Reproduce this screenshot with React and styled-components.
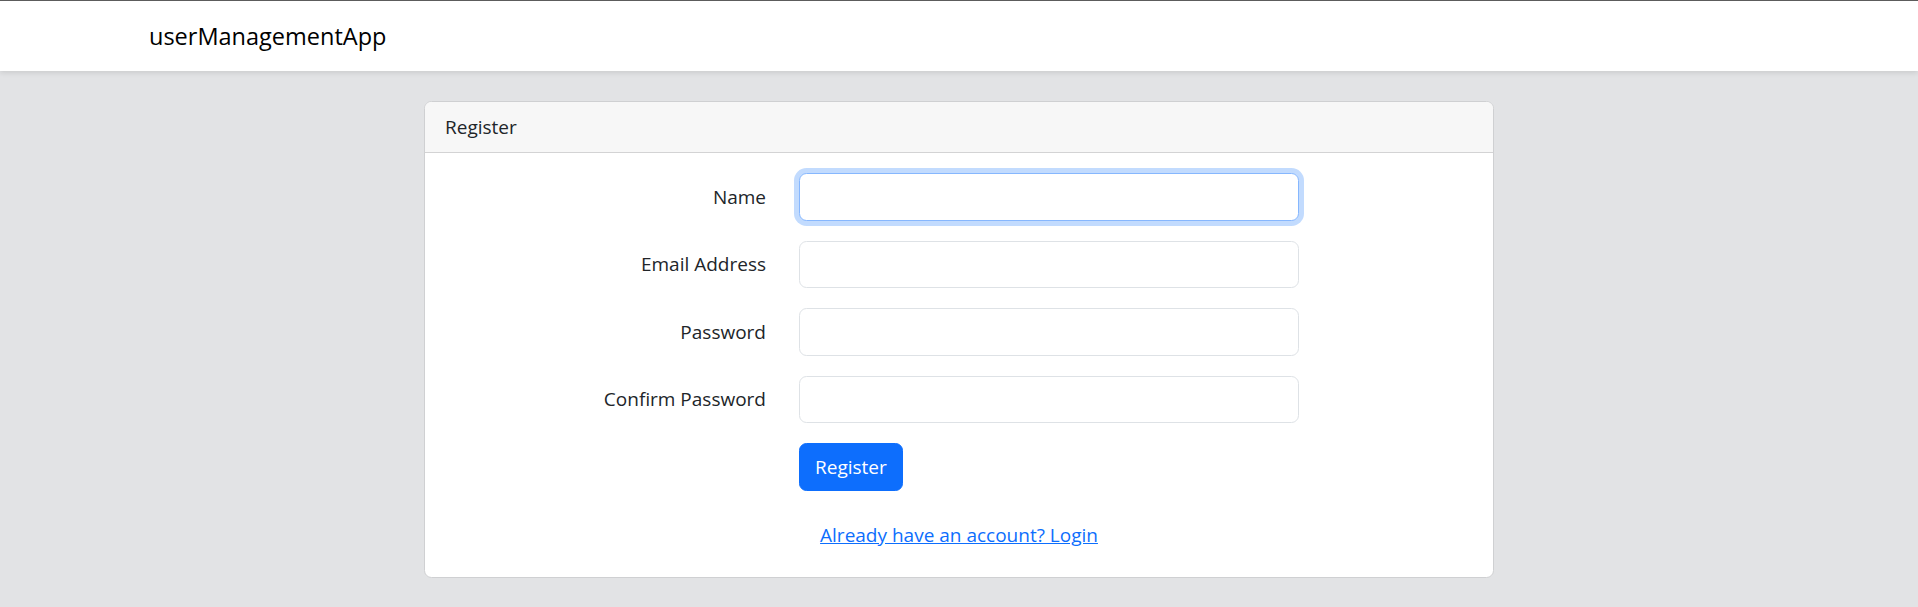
import React from 'react';
import styled, { createGlobalStyle } from 'styled-components';

const GlobalStyle = createGlobalStyle`
  * {
    box-sizing: border-box;
  }
  body {
    margin: 0;
    background: #e2e3e5;
    color: #212529;
    font-family: "Segoe UI", "Open Sans", "Noto Sans", sans-serif;
    font-size: 19px;
    line-height: 30px;
  }
`;

const Navbar = styled.nav`
  height: 71px;
  background: #fff;
  border-top: 1px solid #5c5c5c;
  box-shadow: 0 2px 5px rgba(0, 0, 0, 0.1);
  display: flex;
  align-items: center;
`;

const Container = styled.div`
  width: 100%;
  max-width: 1650px;
  margin: 0 auto;
  padding: 0 15px;
`;

const Brand = styled.a`
  font-size: 23.5px;
  line-height: 36px;
  color: #000;
  text-decoration: none;
`;

const Main = styled.main`
  display: flex;
  justify-content: center;
  padding-top: 30px;
`;

const Card = styled.section`
  width: 1070px;
  background: #fff;
  border: 1px solid #cfd0d2;
  border-radius: 7.5px;
  overflow: hidden;
`;

const CardHeader = styled.header`
  padding: 10px 20px;
  background: #f7f7f7;
  border-bottom: 1px solid #d3d3d4;
`;

const CardBody = styled.div`
  padding: 20px;
`;

const Form = styled.form`
  display: grid;
  grid-template-columns: 321px 500px;
  column-gap: 33px;
  row-gap: 20px;
`;

const Label = styled.label`
  text-align: right;
  padding: 8.5px 0;
`;

const Input = styled.input`
  display: block;
  width: 100%;
  height: 47.5px;
  padding: 7.5px 15px;
  font: inherit;
  color: #212529;
  background: #fff;
  border: 1px solid ${(p) => (p.$focused ? '#86b7fe' : '#dee2e6')};
  border-radius: 7.5px;
  outline: none;
  box-shadow: ${(p) => (p.$focused ? '0 0 0 5px rgba(13, 110, 253, 0.25)' : 'none')};
`;

const Button = styled.button`
  grid-column: 2;
  justify-self: start;
  height: 47.5px;
  padding: 7.5px 15px;
  font: inherit;
  color: #fff;
  background: #0d6efd;
  border: 1px solid #0d6efd;
  border-radius: 7.5px;
  cursor: pointer;
`;

const Footer = styled.p`
  margin: 29px 0 7px;
  text-align: center;
`;

const LoginLink = styled.a`
  color: #0d6efd;
  text-decoration: underline;
`;

const fields = [
  { id: 'name', label: 'Name', type: 'text', focused: true },
  { id: 'email', label: 'Email Address', type: 'email' },
  { id: 'password', label: 'Password', type: 'password' },
  { id: 'confirm', label: 'Confirm Password', type: 'password' },
];

export default function App() {
  return (
    <>
      <GlobalStyle />
      <Navbar>
        <Container>
          <Brand href="#">userManagementApp</Brand>
        </Container>
      </Navbar>
      <Main>
        <Card>
          <CardHeader>Register</CardHeader>
          <CardBody>
            <Form onSubmit={(e) => e.preventDefault()}>
              {fields.map((f) => (
                <React.Fragment key={f.id}>
                  <Label htmlFor={f.id}>{f.label}</Label>
                  <Input id={f.id} type={f.type} $focused={f.focused} />
                </React.Fragment>
              ))}
              <Button type="submit">Register</Button>
            </Form>
            <Footer>
              <LoginLink href="#">Already have an account? Login</LoginLink>
            </Footer>
          </CardBody>
        </Card>
      </Main>
    </>
  );
}
